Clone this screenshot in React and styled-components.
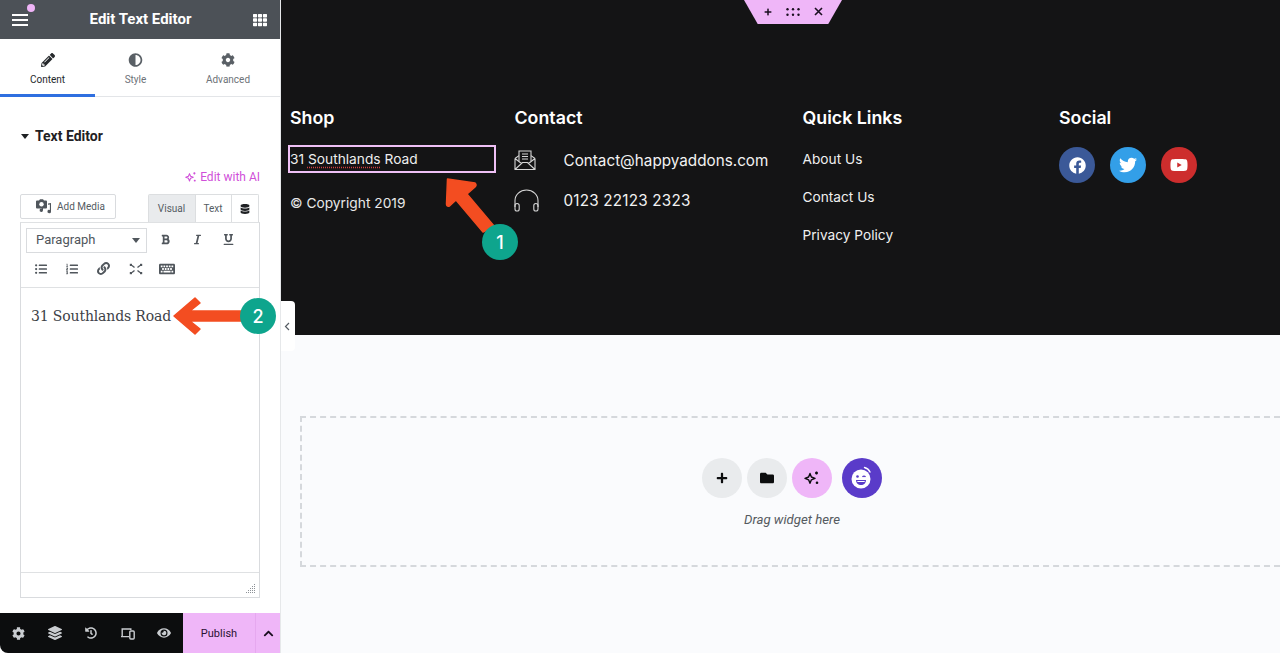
import React from 'react';
import styled, { createGlobalStyle } from 'styled-components';
import {
  FaPencilAlt, FaAdjust, FaCog, FaBold, FaItalic, FaUnderline, FaListUl, FaListOl, FaLink,
  FaKeyboard, FaDatabase, FaLayerGroup, FaHistory, FaEye, FaChevronUp,
  FaFacebook, FaTwitter, FaYoutube, FaPlus, FaFolder, FaTh,
} from 'react-icons/fa';

const GlobalStyle = createGlobalStyle`
  html, body { margin: 0; padding: 0; height: 100%; overflow: hidden; }
  body { font-family: Roboto, "Liberation Sans", sans-serif; background: #fafbfd; }
  * { box-sizing: border-box; }
`;

const Page = styled.div`
  position: relative;
  display: flex;
  width: 1280px;
  height: 653px;
  overflow: hidden;
`;

/* ---- left panel ---- */
const Panel = styled.aside`
  display: flex;
  flex-direction: column;
  width: 281px;
  height: 653px;
  background: #fff;
  border-right: 1px solid #e6e8ea;
`;

const PanelHeader = styled.header`
  position: relative;
  display: flex;
  align-items: center;
  justify-content: space-between;
  height: 39px;
  padding: 0 13px 0 12px;
  background: #4c5157;
  color: #fff;
`;

const HeaderTitle = styled.div`
  font-size: 15px;
  font-weight: 700;
  padding-bottom: 2px;
`;

const Burger = styled.div`
  display: flex;
  flex-direction: column;
  gap: 3px;
  width: 16px;
  span { height: 2px; background: #fff; }
`;

const Dot = styled.i`
  position: absolute;
  left: 27px;
  top: 4px;
  width: 8px;
  height: 8px;
  border-radius: 50%;
  background: #efb4f7;
`;

const Tabs = styled.nav`
  display: flex;
  height: 58px;
  border-bottom: 1px solid #e3e5e8;
`;

const Tab = styled.div`
  display: flex;
  flex-direction: column;
  align-items: center;
  width: ${p => p.$w}px;
  height: 58px;
  padding-top: 14px;
  gap: 7px;
  font-size: 10px;
  line-height: 12px;
  color: ${p => (p.$active ? '#25282b' : '#6d7278')};
  border-bottom: 3px solid ${p => (p.$active ? '#2f6fe0' : 'transparent')};
  svg { color: ${p => (p.$active ? '#26292c' : '#5a6066')}; height: 14px; }
`;

const SectionTitle = styled.div`
  display: flex;
  align-items: center;
  gap: 6px;
  margin: 31px 0 0 21px;
  height: 16px;
  font-size: 14px;
  font-weight: 700;
  color: #1f2124;
`;

const Caret = styled.i`
  width: 0;
  height: 0;
  border-left: 4px solid transparent;
  border-right: 4px solid transparent;
  border-top: 5px solid #1f2124;
`;

const AiLink = styled.div`
  display: flex;
  align-items: center;
  justify-content: flex-end;
  gap: 3px;
  height: 16px;
  margin: 25px 20px 9px 0;
  font-size: 12px;
  color: #d04fd9;
`;

const EditorTop = styled.div`
  display: flex;
  justify-content: space-between;
  height: 28px;
  margin: 0 20px;
`;

const MediaButton = styled.div`
  display: flex;
  align-items: center;
  gap: 5px;
  width: 96px;
  height: 25px;
  padding-left: 14px;
  border: 1px solid #d9dbde;
  border-radius: 2px;
  font-size: 10px;
  color: #555c63;
`;

const ModeTabs = styled.div`
  display: flex;
  height: 28px;
  margin-right: 1px;
  border: 1px solid #dcdee0;
  border-bottom: none;
  border-radius: 2px 2px 0 0;
`;

const ModeTab = styled.div`
  display: flex;
  align-items: center;
  justify-content: center;
  width: ${p => p.$w}px;
  padding-right: 1px;
  font-size: 10px;
  color: #555c63;
  background: ${p => (p.$active ? '#e9ebed' : '#fff')};
  & + & { border-left: 1px solid #dcdee0; }
`;

const Editor = styled.div`
  display: flex;
  flex-direction: column;
  height: 376px;
  margin: 0 20px;
  border: 1px solid #d9dbde;
  border-top: 1px solid #dfe1e3;
`;

const Toolbar = styled.div`
  height: 65px;
  padding: 5px 5px 0;
  border-bottom: 1px solid #dfe1e3;
`;

const ToolRow = styled.div`
  display: flex;
  align-items: center;
  height: ${p => p.$h}px;
`;

const FormatSelect = styled.div`
  display: flex;
  align-items: center;
  justify-content: space-between;
  width: 121px;
  height: 25px;
  padding: 0 6px 2px 9px;
  border: 1px solid #d9dbde;
  font-size: 13px;
  color: #50565c;
`;

const Tool = styled.span`
  display: flex;
  align-items: center;
  justify-content: center;
  width: ${p => p.$w || 31}px;
  margin-bottom: ${p => p.$lift || 0}px;
  color: #50565c;
`;

const SelectCaret = styled.i`
  width: 0;
  height: 0;
  margin-top: 2px;
  border-left: 4px solid transparent;
  border-right: 4px solid transparent;
  border-top: 5px solid #50565c;
`;

const EditorBody = styled.div`
  flex: 1;
  padding: 18px 0 0 10px;
  font-family: "DejaVu Serif", "Liberation Serif", serif;
  font-size: 14px;
  line-height: 20px;
  color: #3c4147;
  letter-spacing: -0.15px;
`;

const StatusBar = styled.div`
  position: relative;
  height: 25px;
  border-top: 1px solid #dfe1e3;
`;

const Grip = styled.svg`
  position: absolute;
  right: 3px;
  bottom: 3px;
`;

const BottomBar = styled.div`
  display: flex;
  height: 40px;
  margin-top: auto;
  background: #0c0d0e;
  border-bottom-left-radius: 8px;
`;

const BarIcons = styled.div`
  display: flex;
  align-items: center;
  width: 183px;
  color: #c9ccd0;
`;

const BarIcon = styled.span`
  display: flex;
  justify-content: center;
  width: 36.5px;
`;

const PublishButton = styled.div`
  display: flex;
  align-items: center;
  justify-content: center;
  width: 72px;
  font-size: 11px;
  color: #2a1233;
  background: #efb6f8;
`;

const PublishMore = styled.div`
  display: flex;
  align-items: center;
  justify-content: center;
  width: 25px;
  color: #1a0e1f;
  background: #efb6f8;
  border-left: 1px solid #e6a8ef;
`;

const CollapseTab = styled.div`
  position: absolute;
  left: 281px;
  top: 301px;
  display: flex;
  align-items: center;
  justify-content: center;
  width: 14px;
  height: 50px;
  padding-right: 3px;
  background: #fff;
  border-radius: 0 4px 4px 0;
  color: #555c63;
`;

/* ---- canvas ---- */
const Canvas = styled.main`
  flex: 1;
  display: flex;
  flex-direction: column;
`;

const FooterSection = styled.section`
  position: relative;
  display: grid;
  grid-template-columns: 224.5px 288px 256.5px 1fr;
  height: 335px;
  padding: 107px 0 0 9px;
  background: #141415;
  color: #fff;
  font-family: Inter, "Liberation Sans", sans-serif;
`;

const Handle = styled.div`
  position: absolute;
  left: 463px;
  top: 0;
  display: flex;
  align-items: center;
  justify-content: center;
  gap: 14px;
  width: 98px;
  height: 24px;
  padding-bottom: 1px;
  color: #1b0f20;
  background: #efb6f8;
  clip-path: polygon(0 0, 100% 0, 86% 100%, 14% 100%);
`;

const FooterColumn = styled.div`
  display: flex;
  flex-direction: column;
`;

const ColumnTitle = styled.h3`
  margin: 0 0 16px;
  font-size: 17.8px;
  line-height: 22px;
  font-weight: 600;
`;

const AddressBox = styled.div`
  display: flex;
  align-items: center;
  width: 208px;
  height: 28px;
  margin-left: -2px;
  border: 2px solid #efc0f5;
  font-size: 13.75px;
  color: #eeeeee;
`;

const SpellError = styled.span`
  text-decoration: underline dotted #d04040;
  text-underline-offset: 3px;
`;

const ShopLine = styled.div`
  margin-top: 21px;
  font-size: 13.75px;
  line-height: 18px;
  color: #e8e8e8;
`;

const ContactRow = styled.div`
  display: flex;
  align-items: center;
  height: 20px;
  margin-top: ${p => p.$mt}px;
  font-size: 15.25px;
  letter-spacing: ${p => p.$track || 0}px;
  color: #f2f2f2;
`;

const ContactGlyph = styled.span`
  display: flex;
  flex: none;
  width: 49px;
  margin-left: -1px;
  margin-right: 1px;
  color: #d6d6d6;
`;

const QuickLink = styled.div`
  height: 18px;
  margin-top: ${p => p.$mt}px;
  font-size: 13.7px;
  line-height: 18px;
  color: #f0f0f0;
`;

const SocialRow = styled.div`
  display: flex;
  gap: 15px;
  margin-top: 2px;
`;

const SocialIcon = styled.div`
  display: flex;
  align-items: center;
  justify-content: center;
  width: 36px;
  height: 36px;
  border-radius: 50%;
  color: #fff;
  background: ${p => p.$bg};
`;

const DropArea = styled.section`
  flex: 1;
  padding: 81px 0 0 19px;
`;

const DropZone = styled.div`
  display: flex;
  flex-direction: column;
  align-items: center;
  height: 151px;
  padding: 40px 0 0 2px;
  border: 2px dashed #d5d8dc;
  border-right: none;
`;

const DropButtons = styled.div`
  display: flex;
  gap: 5px;
`;

const RoundButton = styled.div`
  display: flex;
  align-items: center;
  justify-content: center;
  width: 40px;
  height: 40px;
  margin-left: ${p => p.$ml || 0}px;
  border-radius: 50%;
  color: ${p => p.$fg || '#0c0d0e'};
  background: ${p => p.$bg};
`;

const DropHint = styled.div`
  margin-top: 13px;
  font-size: 13.2px;
  line-height: 17px;
  font-style: italic;
  color: #555a60;
`;

/* ---- annotations ---- */
const Arrow = styled.svg`
  position: absolute;
  left: 0;
  top: 0;
  pointer-events: none;
`;

const StepBadge = styled.div`
  position: absolute;
  left: ${p => p.$x}px;
  top: ${p => p.$y}px;
  display: flex;
  align-items: center;
  justify-content: center;
  width: 36px;
  height: 36px;
  border-radius: 50%;
  font-family: Inter, "Liberation Sans", sans-serif;
  font-size: 18px;
  font-weight: 500;
  color: #fff;
  background: #0ea58d;
`;

const Sparkle = ({ size = 14, color = 'currentColor' }) => (
  <svg width={size} height={size} viewBox="0 0 16 16" fill="none" stroke={color} strokeWidth="1.4">
    <path d="M6 3.500 7.400 7 11 8.400 7.400 9.800 6 13.300 4.600 9.800 1 8.400 4.600 7Z" strokeLinejoin="round" />
    <path d="M12.500 1.500v3M11 3h3M13 11.500v2.500M11.800 12.800h2.400" strokeWidth="1.5" />
  </svg>
);

const MediaIcon = () => (
  <svg width="17" height="16" viewBox="0 0 17 16" fill="#50565c">
    <path d="M2 1.500h2l1-1.300h3L9 1.500h2a1 1 0 0 1 1 1v6a1 1 0 0 1-1 1H2a1 1 0 0 1-1-1v-6a1 1 0 0 1 1-1Z" />
    <circle cx="6.500" cy="5.300" r="2.200" fill="#fff" />
    <path d="M8 11.200a1.700 1.700 0 1 1-1.100-1.600V8h1.100ZM16 4v8.500a1.800 1.800 0 1 1-1.100-1.600V5.400l-1.900.3V4.400Z" />
  </svg>
);

const FullscreenIcon = () => (
  <svg width="14" height="12" viewBox="0 0 14 12" fill="#50565c" stroke="#50565c" strokeWidth="1.3">
    <path d="M3 2.500 5.500 4.600M11 2.500 8.500 4.600M3 9.500 5.500 7.400M11 9.500 8.500 7.400" fill="none" />
    <rect x="0.8" y="0.8" width="2.2" height="2.2" stroke="none" />
    <rect x="11" y="0.8" width="2.2" height="2.2" stroke="none" />
    <rect x="0.8" y="9" width="2.2" height="2.2" stroke="none" />
    <rect x="11" y="9" width="2.2" height="2.2" stroke="none" />
  </svg>
);

const DevicesIcon = () => (
  <svg width="15" height="13" viewBox="0 0 15 13" fill="none" stroke="#c9ccd0" strokeWidth="1.4">
    <path d="M9 9.600H1M2.200 9.400V2h8.600v1" />
    <rect x="9.800" y="4" width="4.400" height="8" rx="1" />
  </svg>
);

const MailIcon = () => (
  <svg width="22" height="21" viewBox="0 0 22 21" fill="none" stroke="currentColor" strokeWidth="1.1">
    <path d="M1 8.500 5 5.600M21 8.500l-4-2.900M1 8.500v11h20v-11M1 19.500l7.500-7h5l7.500 7M1 8.500l6.500 5M21 8.500l-6.500 5" />
    <path d="M5 11V1h12v10M8 4h6M8 6.500h6M8 9h6" />
  </svg>
);

const HeadphonesIcon = () => (
  <svg width="25" height="23" viewBox="0 0 25 23" fill="none" stroke="currentColor" strokeWidth="1.1">
    <path d="M1 18v-6.500a11.500 10.500 0 0 1 23 0V18" />
    <rect x="1" y="14.500" width="4.200" height="7.500" rx="2.100" />
    <rect x="19.800" y="14.500" width="4.200" height="7.500" rx="2.100" />
  </svg>
);

const ChevronThin = () => (
  <svg width="6" height="9" viewBox="0 0 6 9" fill="none" stroke="currentColor" strokeWidth="1.2">
    <path d="M5 1 1.500 4.500 5 8" />
  </svg>
);

const HappyIcon = () => (
  <svg width="24" height="24" viewBox="0 0 24 24">
    <circle cx="11" cy="13" r="9.500" fill="#fff" />
    <path d="M14.500 1.500c2.500.6 4.500 2.200 5.500 4.500" fill="none" stroke="#fff" strokeWidth="1.4" strokeLinecap="round" />
    <circle cx="7.500" cy="10.500" r="1.300" fill="#5a3bc9" />
    <path d="M12.500 11c.8-1.200 2.200-1.200 3 0" fill="none" stroke="#5a3bc9" strokeWidth="1.300" />
    <path d="M6 14h10c0 3-2.200 5-5 5s-5-2-5-5Z" fill="#5a3bc9" />
    <path d="M7.300 15h7.400v1H7.300Z" fill="#fff" />
  </svg>
);

const GripDots = () => (
  <Grip width="10" height="10" viewBox="0 0 10 10" fill="#8d9297">
    {[[8, 0], [6, 2], [8, 2], [4, 4], [6, 4], [8, 4], [2, 6], [4, 6], [6, 6], [8, 6], [0, 8], [2, 8], [4, 8], [6, 8], [8, 8]].map(([x, y]) => (
      <rect key={`${x}-${y}`} x={x} y={y} width="1" height="1" />
    ))}
  </Grip>
);

const HandleDots = () => (
  <svg width="14" height="8" viewBox="0 0 14 8" fill="currentColor">
    {[1.5, 7, 12.5].map(x => [1.2, 6.8].map(y => <circle key={`${x}-${y}`} cx={x} cy={y} r="1.2" />))}
  </svg>
);

const CloseX = () => (
  <svg width="9" height="9" viewBox="0 0 9 9" stroke="currentColor" strokeWidth="1.6">
    <path d="M1 1l7 7M8 1 1 8" />
  </svg>
);

export default function App() {
  return (
    <Page>
      <GlobalStyle />
      <Panel>
        <PanelHeader>
          <Burger><span /><span /><span /></Burger>
          <Dot />
          <HeaderTitle>Edit Text Editor</HeaderTitle>
          <FaTh size={14} />
        </PanelHeader>
        <Tabs>
          <Tab $w={95} $active><FaPencilAlt size={14} />Content</Tab>
          <Tab $w={81}><FaAdjust size={15} />Style</Tab>
          <Tab $w={104}><FaCog size={14} />Advanced</Tab>
        </Tabs>
        <SectionTitle><Caret />Text Editor</SectionTitle>
        <AiLink><Sparkle size={12} />Edit with AI</AiLink>
        <EditorTop>
          <MediaButton><MediaIcon />Add Media</MediaButton>
          <ModeTabs>
            <ModeTab $w={46} $active>Visual</ModeTab>
            <ModeTab $w={36}>Text</ModeTab>
            <ModeTab $w={27}><FaDatabase size={10} color="#1f2124" /></ModeTab>
          </ModeTabs>
        </EditorTop>
        <Editor>
          <Toolbar>
            <ToolRow $h={25}>
              <FormatSelect>Paragraph<SelectCaret /></FormatSelect>
              <Tool $w={36} $lift={3}><FaBold size={11} /></Tool>
              <Tool $w={28} $lift={3}><FaItalic size={11} /></Tool>
              <Tool $w={34} $lift={3}><FaUnderline size={11} /></Tool>
            </ToolRow>
            <ToolRow $h={31}>
              <Tool $w={30}><FaListUl size={12} /></Tool>
              <Tool><FaListOl size={12} /></Tool>
              <Tool $w={33}><FaLink size={13} /></Tool>
              <Tool><FullscreenIcon /></Tool>
              <Tool><FaKeyboard size={16} /></Tool>
            </ToolRow>
          </Toolbar>
          <EditorBody>31 Southlands Road</EditorBody>
          <StatusBar><GripDots /></StatusBar>
        </Editor>
        <BottomBar>
          <BarIcons>
            <BarIcon><FaCog size={13} /></BarIcon>
            <BarIcon><FaLayerGroup size={14} /></BarIcon>
            <BarIcon><FaHistory size={12} /></BarIcon>
            <BarIcon><DevicesIcon /></BarIcon>
            <BarIcon><FaEye size={14} /></BarIcon>
          </BarIcons>
          <PublishButton>Publish</PublishButton>
          <PublishMore><FaChevronUp size={11} /></PublishMore>
        </BottomBar>
      </Panel>

      <Canvas>
        <FooterSection>
          <Handle>
            <FaPlus size={8} />
            <HandleDots />
            <CloseX />
          </Handle>
          <FooterColumn>
            <ColumnTitle>Shop</ColumnTitle>
            <AddressBox><span>31&nbsp;<SpellError>Southlands</SpellError>&nbsp;Road</span></AddressBox>
            <ShopLine>© Copyright 2019</ShopLine>
          </FooterColumn>
          <FooterColumn>
            <ColumnTitle>Contact</ColumnTitle>
            <ContactRow $mt={5}><ContactGlyph><MailIcon /></ContactGlyph>Contact@happyaddons.com</ContactRow>
            <ContactRow $mt={20} $track={0.2}><ContactGlyph><HeadphonesIcon /></ContactGlyph>0123 22123 2323</ContactRow>
          </FooterColumn>
          <FooterColumn>
            <ColumnTitle>Quick Links</ColumnTitle>
            <QuickLink $mt={5}>About Us</QuickLink>
            <QuickLink $mt={20}>Contact Us</QuickLink>
            <QuickLink $mt={20}>Privacy Policy</QuickLink>
          </FooterColumn>
          <FooterColumn>
            <ColumnTitle>Social</ColumnTitle>
            <SocialRow>
              <SocialIcon $bg="#3b5998"><FaFacebook size={17} /></SocialIcon>
              <SocialIcon $bg="#339fe8"><FaTwitter size={18} /></SocialIcon>
              <SocialIcon $bg="#cd2d2d"><FaYoutube size={18} /></SocialIcon>
            </SocialRow>
          </FooterColumn>
        </FooterSection>
        <DropArea>
          <DropZone>
            <DropButtons>
              <RoundButton $bg="#e9ebed"><FaPlus size={12} /></RoundButton>
              <RoundButton $bg="#e9ebed"><FaFolder size={14} /></RoundButton>
              <RoundButton $bg="#efb6f8"><Sparkle size={16} /></RoundButton>
              <RoundButton $bg="#5a3bc9" $fg="#fff" $ml={5}><HappyIcon /></RoundButton>
            </DropButtons>
            <DropHint>Drag widget here</DropHint>
          </DropZone>
        </DropArea>
      </Canvas>

      <CollapseTab><ChevronThin /></CollapseTab>

      <Arrow width="1280" height="653" fill="#f34d21" stroke="#f34d21" strokeWidth="1.5" strokeLinejoin="round">
        <path d="M447.500 179 475 183Q477 185 475 187L467 194 494 226 483 232 456 200 449.500 206Q446.500 207 446.500 204Z" />
        <path d="M174 316 195 298 200 303 190 311H245V321H190L200 329 195 334Z" />
      </Arrow>
      <StepBadge $x={482} $y={224}>1</StepBadge>
      <StepBadge $x={240} $y={298}>2</StepBadge>
    </Page>
  );
}
